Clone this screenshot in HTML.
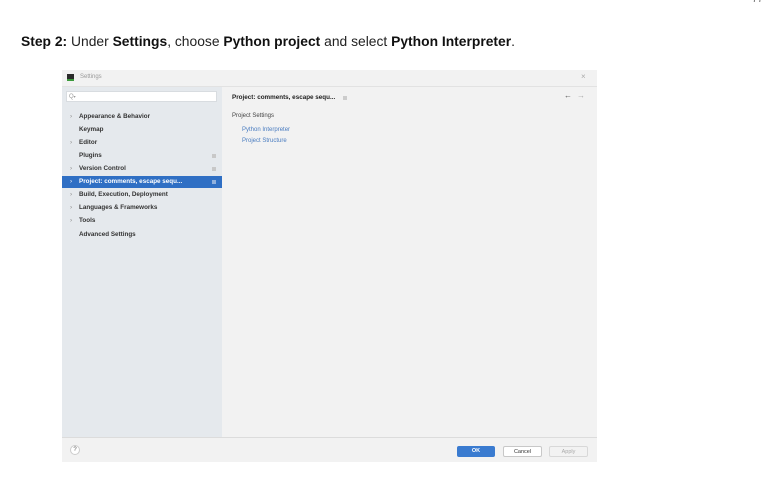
<!DOCTYPE html>
<html><head><style>
body{margin:0;width:768px;height:499px;background:#fff;position:relative;font-family:"Liberation Sans",sans-serif;overflow:hidden}
.h{position:absolute;left:21px;top:33px;font-size:13.85px;color:#222;white-space:nowrap}
.h b{color:#111}
.dlg{position:absolute;left:62px;top:70px;width:535px;height:391px;background:#f2f2f2}
.title{position:absolute;left:0;top:0;width:535px;height:16px;background:#f2f2f2;border-bottom:1px solid #e2e2e2;font-size:6px;color:#999}
.side{position:absolute;left:0;top:17px;width:160px;height:350px;background:#e5e9ed}
.row{position:absolute;left:0;width:160px;height:12px;font-size:6.3px;font-weight:bold;color:#333;line-height:12px}
.row span.t{position:absolute;left:17px}
.row span.a{position:absolute;left:8px;font-weight:normal;color:#888}
.row span.i{position:absolute;left:150px;top:4px;width:4px;height:4px;background:#c8c8c8}
.sel{background:#2f6fc4;color:#fff}
.sel span.a{color:#fff}
.bottom{position:absolute;left:0;top:367px;width:535px;height:24px;border-top:1px solid #dcdcdc;background:#f2f2f2}
.btn{position:absolute;top:8px;height:11px;font-size:5.5px;line-height:11px;text-align:center;border-radius:2px}
</style></head><body>
<div class="h"><b>Step 2:</b> Under <b>Settings</b>, choose <b>Python project</b> and select <b>Python Interpreter</b>.</div>
<div style="position:absolute;left:752px;top:-6px;font-size:10px;color:#666">77</div>
<div class="dlg">
 <div class="title"><div style="position:absolute;left:5px;top:4px;width:7px;height:7px;background:#2b2b2b;border-bottom:2px solid #3c9a3c;box-sizing:border-box"></div><span style="position:absolute;left:18px;top:4px">Settings</span><span style="position:absolute;left:519px;top:2px;font-size:8px;color:#aaa">×</span></div>
 <div class="side">
  <div style="position:absolute;left:4px;top:4px;width:151px;height:11px;background:#fff;border:1px solid #d8dce0;box-sizing:border-box;font-size:6px;color:#999;line-height:10px;padding-left:2px">Q<span style="font-size:4px">▾</span></div>
  <div class="row" style="top:24px"><span class="a">›</span><span class="t">Appearance &amp; Behavior</span></div>
  <div class="row" style="top:37px"><span class="t">Keymap</span></div>
  <div class="row" style="top:50px"><span class="a">›</span><span class="t">Editor</span></div>
  <div class="row" style="top:63px"><span class="t">Plugins</span><span class="i"></span></div>
  <div class="row" style="top:76px"><span class="a">›</span><span class="t">Version Control</span><span class="i"></span></div>
  <div class="row sel" style="top:89px"><span class="a">›</span><span class="t">Project: comments, escape sequ...</span><span class="i" style="background:#8fb0dd"></span></div>
  <div class="row" style="top:102px"><span class="a">›</span><span class="t">Build, Execution, Deployment</span></div>
  <div class="row" style="top:115px"><span class="a">›</span><span class="t">Languages &amp; Frameworks</span></div>
  <div class="row" style="top:128px"><span class="a">›</span><span class="t">Tools</span></div>
  <div class="row" style="top:142px"><span class="t">Advanced Settings</span></div>
 </div>
 <div style="position:absolute;left:170px;top:24px;font-size:6.3px;font-weight:bold;color:#222">Project: comments, escape sequ...</div>
 <div style="position:absolute;left:281px;top:26px;width:4px;height:4px;background:#ccc"></div>
 <div style="position:absolute;left:502px;top:21px;font-size:8px;color:#555">←</div>
 <div style="position:absolute;left:515px;top:21px;font-size:8px;color:#aaa">→</div>
 <div style="position:absolute;left:170px;top:43px;font-size:6px;color:#444">Project Settings</div>
 <div style="position:absolute;left:180px;top:57px;font-size:6px;color:#4a7cc0">Python Interpreter</div>
 <div style="position:absolute;left:180px;top:68px;font-size:6px;color:#4a7cc0">Project Structure</div>
 <div class="bottom">
  <div style="position:absolute;left:8px;top:7px;width:10px;height:10px;border-radius:50%;background:#fff;border:1px solid #ccc;box-sizing:border-box;font-size:6px;text-align:center;line-height:9px;color:#555">?</div>
  <div class="btn" style="left:395px;width:38px;background:#3a7bd0;color:#fff;font-weight:bold">OK</div>
  <div class="btn" style="left:441px;width:39px;background:#fff;border:1px solid #c8c8c8;box-sizing:border-box;color:#333">Cancel</div>
  <div class="btn" style="left:487px;width:39px;background:#f2f2f2;border:1px solid #d8d8d8;box-sizing:border-box;color:#aaa">Apply</div>
 </div>
</div>
</body></html>
